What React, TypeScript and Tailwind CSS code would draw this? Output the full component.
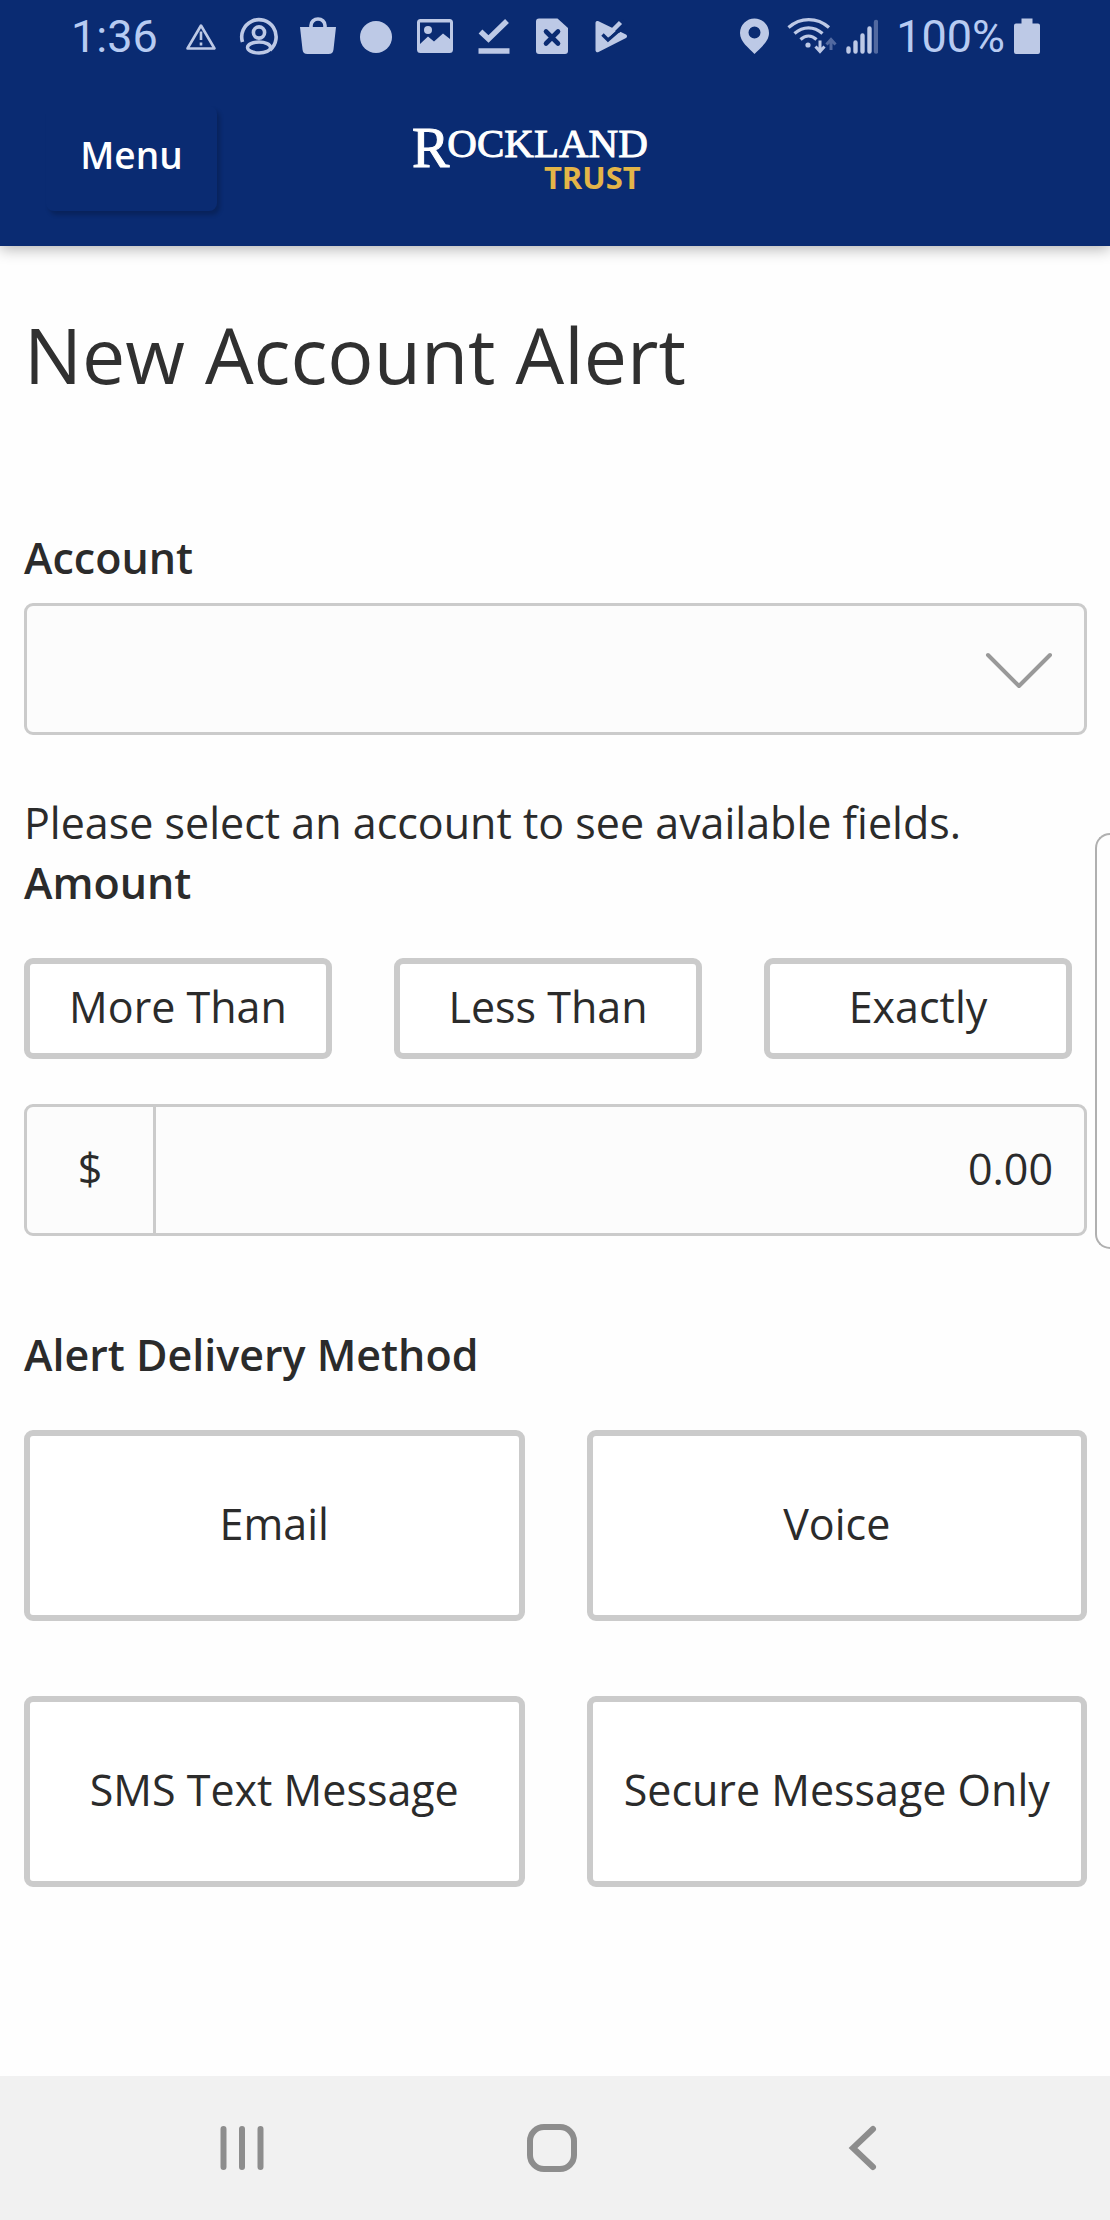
import React, { useState } from "react";

const statusIcon = "block size-10 shrink-0";

function StatusBar() {
  return (
    <div className="flex h-[78px] items-start justify-between pt-4 pr-[70px] pl-[71px] font-['Roboto',sans-serif] text-[45px] leading-[42px] text-[#b7cbf2]">
      <div className="flex items-center gap-[23px]">
        <span>1:36</span>
        <div className="flex w-[450px] justify-between text-[#bdc9e6]">
          <svg className={statusIcon} viewBox="0 0 40 40" fill="none" stroke="currentColor" aria-hidden="true">
            <path d="M20 8.500 33.500 31.500h-27Z" strokeWidth="2.6" strokeLinejoin="round" />
            <path d="M20 14.500v8.500M20 25.500v3" strokeWidth="2.6" />
          </svg>
          <svg className={statusIcon} viewBox="0 0 40 40" fill="none" stroke="currentColor" aria-hidden="true">
            <path d="M3.500 25A17.200 17.200 0 1 1 31 33" strokeWidth="3.6" />
            <circle cx="20" cy="15.500" r="5.600" strokeWidth="3.600" />
            <ellipse cx="20" cy="30.500" rx="11.500" ry="5.500" strokeWidth="3.400" />
          </svg>
          <svg className={statusIcon} viewBox="0 0 40 40" aria-hidden="true">
            <path d="M13 13V8.500a7 6.500 0 0 1 14 0V13" fill="none" stroke="currentColor" strokeWidth="3.600" />
            <path d="M2 10h36l-2.500 22.500a5 5 0 0 1-5 4.500h-21a5 5 0 0 1-5-4.500Z" fill="currentColor" />
          </svg>
          <svg className={statusIcon} viewBox="0 0 40 40" aria-hidden="true">
            <circle cx="20" cy="20" r="16" fill="currentColor" />
          </svg>
          <svg className={statusIcon} viewBox="0 0 40 40" aria-hidden="true">
            <path fill="currentColor" fillRule="evenodd" d="M5.500 2h29A3.500 3.500 0 0 1 38 5.500v27a3.500 3.500 0 0 1-3.500 3.500h-29A3.500 3.500 0 0 1 2 32.500v-27A3.500 3.500 0 0 1 5.500 2ZM5 5.500v21.500l8-7.500 6 5 9-8 7 5.500V5.500Z" />
            <circle cx="13" cy="13" r="4" fill="currentColor" />
          </svg>
          <svg className={statusIcon} viewBox="0 0 40 40" fill="none" stroke="currentColor" aria-hidden="true">
            <path d="m6.500 14.500 8 7.500L33 4" strokeWidth="5.500" />
            <path d="M4.500 34h31" strokeWidth="5.500" />
          </svg>
          <svg className={statusIcon} viewBox="0 0 40 40" aria-hidden="true">
            <path d="M7 1.500h18.500L36 11v23a3 3 0 0 1-3 3H7a3 3 0 0 1-3-3V4.500a3 3 0 0 1 3-3Z" fill="currentColor" />
            <path d="m14 14.500 12 12m0-12-12 12" stroke="#0a2b72" strokeWidth="4.600" strokeLinecap="round" />
          </svg>
          <svg className={statusIcon} viewBox="0 0 40 40" aria-hidden="true">
            <path d="M7 4 35 17.500a2 2 0 0 1 0 3.500L7.500 35a2 2 0 0 1-3-2V6a2 2 0 0 1 2.500-2Z" fill="currentColor" />
            <path d="M21 12.500 32 2l5 6-9 8Z" fill="#0a2b72" />
            <path d="m11.500 17.500 5.500 5.500L32 10" fill="none" stroke="#0a2b72" strokeWidth="3.400" />
            <path d="M17 18 29.500 5.500" fill="none" stroke="currentColor" strokeWidth="4.500" />
          </svg>
        </div>
      </div>
      <div className="flex items-center text-[#bdc9e6]">
        <svg className="block h-10 w-[31px]" viewBox="0 0 31 40" aria-hidden="true">
          <path fill="currentColor" fillRule="evenodd" d="M15.500 1.500A14.500 14.500 0 0 1 30 16c0 9-9 15-14.500 21C10 31 1 25 1 16A14.500 14.500 0 0 1 15.500 1.500Zm0 8a6 6 0 1 0 0 12 6 6 0 0 0 0-12Z" />
        </svg>
        <svg className="ml-[17px] block h-10 w-[50px]" viewBox="0 0 50 40" fill="none" stroke="currentColor" aria-hidden="true">
          <path d="M1.500 10.500C13.500 0 30 0 42 10.500M7.500 16.500c8.500-7.500 19.500-7.500 28 0M13.500 22.500c5-4.500 11-4.500 16 0" strokeWidth="3.300" />
          <circle cx="21" cy="28" r="2.600" fill="currentColor" stroke="none" />
          <path d="M33 23.500V34m-4.500-4.500 4.500 5 4.500-5" strokeWidth="3" />
          <path d="M44 33V23m-4.500 4.500 4.500-5 4.500 5" strokeWidth="3" opacity=".4" />
        </svg>
        <svg className="ml-[9px] block h-10 w-8" viewBox="0 0 32 40" fill="none" stroke="currentColor" strokeWidth="4.400" strokeLinecap="round" aria-hidden="true">
          <path d="M2.500 31.500v3M9.500 25.500v9M16.500 18.500v16M23.500 11.500v23" />
          <path d="M30 5v29.500" opacity=".4" />
        </svg>
        <span className="ml-[18px] text-[#b7cbf2]">100%</span>
        <svg className="ml-[9px] block h-10 w-[26px]" viewBox="0 0 26 40" aria-hidden="true">
          <path d="M7.500 1.500h11v5H24a2 2 0 0 1 2 2V35a2 2 0 0 1-2 2H2a2 2 0 0 1-2-2V8.500a2 2 0 0 1 2-2h5.500Z" fill="currentColor" />
        </svg>
      </div>
    </div>
  );
}

function Logo() {
  return (
    <div className="mt-[45px] flex items-start font-['Liberation_Serif',serif] text-white [-webkit-text-stroke:1px_white]" role="img" aria-label="Rockland Trust">
      <span className="text-[56px] leading-[50px]">R</span>
      <div className="-ml-0.5 flex flex-col items-end">
        <span className="text-[41px] leading-10">OCKLAND</span>
        <span className="mr-[7px] font-['Open_Sans',sans-serif] text-[31px] leading-7 font-bold text-[#e4b548] [-webkit-text-stroke:0px]">TRUST</span>
      </div>
    </div>
  );
}

function Choice({ label, selected, onSelect, tall }: { label: string; selected: boolean; onSelect: () => void; tall?: boolean }) {
  return (
    <button
      type="button"
      aria-pressed={selected}
      onClick={onSelect}
      className={`rounded-[9px] border-6 border-[#cbcbcb] bg-white pb-1 text-center whitespace-nowrap ${tall ? "h-[191px]" : "h-[101px]"}`}
    >
      {label}
    </button>
  );
}

export default function App() {
  const [comparison, setComparison] = useState("");
  const [method, setMethod] = useState("");
  const [amount, setAmount] = useState("0.00");

  return (
    <div className="relative flex min-h-screen flex-col bg-[#fefefe] font-['Open_Sans',sans-serif] text-[43px] leading-[60px] text-[#2b2b2b]">
      <header className="bg-[#0a2b72] shadow-[0_3px_14px_rgba(0,0,0,0.3)]">
        <StatusBar />
        <div className="flex h-[168px] items-start">
          <button type="button" className="mt-7 ml-[46px] h-[105px] w-[171px] rounded-lg pb-2 text-[37px] font-semibold text-white shadow-[3px_4px_4px_rgba(0,0,0,0.2)]">
            Menu
          </button>
          <div className="ml-[195px]">
            <Logo />
          </div>
        </div>
      </header>

      <main className="pt-14 pr-[23px] pb-16 pl-6">
        <h1 className="text-[77px] leading-[106px] text-[#303030]">New Account Alert</h1>

        <label htmlFor="account" className="mt-[120px] block font-semibold">Account</label>
        <div className="relative mt-[15px]">
          <select id="account" className="block h-[132px] w-full appearance-none rounded-[9px] border-3 border-[#cbcbcb] bg-[#fcfcfc] px-8">
            <option value=""></option>
          </select>
          <svg className="pointer-events-none absolute top-12 right-8 h-10 w-[70px]" viewBox="0 0 70 40" fill="none" stroke="#999" strokeWidth="4" strokeLinecap="round" strokeLinejoin="round" aria-hidden="true">
            <path d="m3 4 31 31L65 4" />
          </svg>
        </div>

        <p className="mt-[58px]">Please select an account to see available fields.</p>

        <h2 className="font-semibold">Amount</h2>
        <div className="mt-[45px] mr-[15px] grid grid-cols-3 gap-[62px]">
          {["More Than", "Less Than", "Exactly"].map((label) => (
            <Choice key={label} label={label} selected={comparison === label} onSelect={() => setComparison(label)} />
          ))}
        </div>

        <div className="mt-[45px] flex h-[132px] items-stretch overflow-hidden rounded-[9px] border-3 border-[#cbcbcb] bg-[#fcfcfc]">
          <label htmlFor="amount" className="flex w-[129px] shrink-0 items-center justify-center border-r-3 border-[#cbcbcb] pb-0.5">$</label>
          <input id="amount" value={amount} onChange={(e) => setAmount(e.target.value)} inputMode="decimal" className="min-w-0 flex-1 bg-transparent pr-[31px] pb-0.5 pl-6 text-right outline-none" />
        </div>

        <h2 className="mt-[89px] font-semibold">Alert Delivery Method</h2>
        <div className="mt-[45px] grid grid-cols-2 gap-x-[62px] gap-y-[75px]">
          {["Email", "Voice", "SMS Text Message", "Secure Message Only"].map((label) => (
            <Choice key={label} label={label} tall selected={method === label} onSelect={() => setMethod(label)} />
          ))}
        </div>
      </main>

      <div className="absolute top-[833px] right-0 h-[416px] w-[15px] rounded-l-[18px] border-2 border-r-0 border-[#b0b0b0] bg-[#fefefe]" />

      <nav className="mt-auto flex h-36 items-center justify-center gap-[250px] bg-[#f1f1f1] pr-1.5 text-[#8d8d8d]" aria-label="System navigation">
        <button type="button" aria-label="Recent apps">
          <svg className="block size-[60px]" viewBox="0 0 60 60" fill="none" stroke="currentColor" strokeWidth="6" strokeLinecap="round">
            <path d="M11.500 11v38M30 11v38M48.500 11v38" />
          </svg>
        </button>
        <button type="button" aria-label="Home">
          <svg className="block size-[60px]" viewBox="0 0 60 60" fill="none" stroke="currentColor" strokeWidth="6">
            <rect x="8" y="9" width="44" height="42" rx="14" />
          </svg>
        </button>
        <button type="button" aria-label="Back">
          <svg className="block size-[60px]" viewBox="0 0 60 60" fill="none" stroke="currentColor" strokeWidth="6" strokeLinecap="round">
            <path d="M41 11 21 30l20 19" />
          </svg>
        </button>
      </nav>
    </div>
  );
}
